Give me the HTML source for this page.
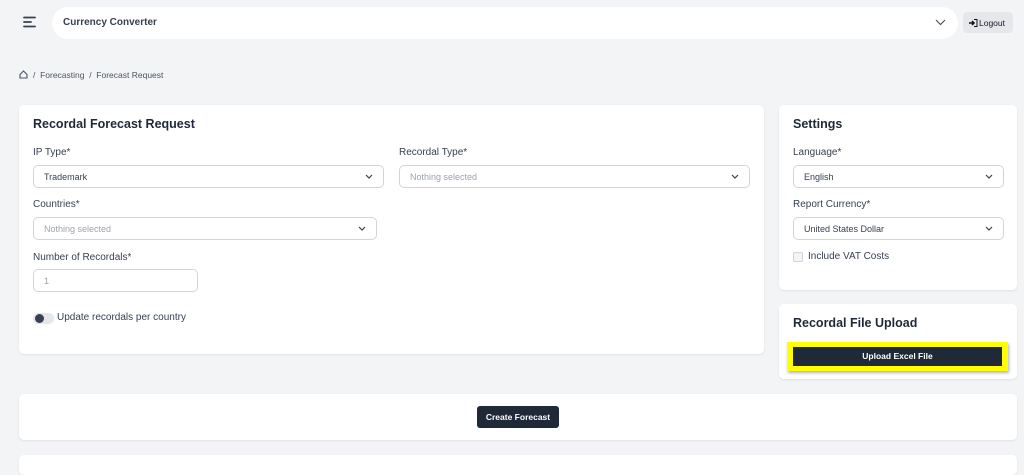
<!DOCTYPE html>
<html><head><style>
*{box-sizing:border-box;margin:0;padding:0}
body{width:1024px;height:458px;overflow:hidden;background:#f3f4f6;font-family:"Liberation Sans",sans-serif;color:#1f2937;position:relative}
.a{position:absolute}
.card{position:absolute;background:#fff;border-radius:5px;box-shadow:0 1px 2px rgba(0,0,0,.08)}
.lbl{position:absolute;font-size:10px;color:#374151}
.sel{position:absolute;height:23px;border:1px solid #d1d5db;border-radius:5px;font-size:9px;color:#374151;padding:6px 10px;background:#fff}
.sel.ph{color:#9ca3af}
.sel svg{position:absolute;right:10px;top:8px}
h3{position:absolute;font-size:12.5px;font-weight:bold;color:#1f2937}
</style></head><body>
<svg class="a" style="left:23px;top:16px" width="14" height="12" viewBox="0 0 14 12"><path d="M1 1.5h11M1 6h7M1 10.5h11" stroke="#374151" stroke-width="1.8" stroke-linecap="round"/></svg>
<div class="a" style="left:52px;top:7px;width:906px;height:32px;background:#fff;border-radius:16px"></div>
<div class="a" style="left:63px;top:17px;font-size:10px;font-weight:bold;color:#374151">Currency Converter</div>
<svg class="a" style="left:935px;top:19px" width="11" height="7" viewBox="0 0 11 7"><path d="M1 1l4.5 4.5L10 1" stroke="#4b5563" fill="none" stroke-width="1.2"/></svg>
<div class="a" style="left:963px;top:12px;width:50px;height:21px;background:#e5e7eb;border-radius:4px;font-size:8.5px;color:#111827;padding:6px 0 0 6px">
<svg style="vertical-align:-1px;margin-right:1px" width="9" height="8" viewBox="0 0 9 8"><path d="M5 .5h3v7H5" stroke="#111" fill="none" stroke-width="1"/><path d="M0 4h5M3 2l2 2-2 2" stroke="#111" fill="none" stroke-width="1.5"/></svg>Logout</div>
<svg class="a" style="left:19px;top:70px" width="9" height="9" viewBox="0 0 9 9"><path d="M1 4.5L4.5 1 8 4.5V8H1z" stroke="#4b5563" fill="none" stroke-width="1.1"/></svg>
<div class="a" style="left:33px;top:70px;font-size:8.5px;color:#4b5563">/ &nbsp;Forecasting &nbsp;/ &nbsp;Forecast Request</div>

<div class="card" style="left:19px;top:105px;width:745px;height:249px"></div>
<h3 style="left:33px;top:117px">Recordal Forecast Request</h3>
<div class="lbl" style="left:33px;top:147px">IP Type*</div>
<div class="sel" style="left:33px;top:165px;width:351px">Trademark<svg width="8" height="5" viewBox="0 0 8 5"><path d="M1 1l3 3 3-3" stroke="#374151" fill="none" stroke-width="1.2"/></svg></div>
<div class="lbl" style="left:399px;top:147px">Recordal Type*</div>
<div class="sel ph" style="left:399px;top:165px;width:351px">Nothing selected<svg width="8" height="5" viewBox="0 0 8 5"><path d="M1 1l3 3 3-3" stroke="#374151" fill="none" stroke-width="1.2"/></svg></div>
<div class="lbl" style="left:33px;top:199px">Countries*</div>
<div class="sel ph" style="left:33px;top:217px;width:344px">Nothing selected<svg width="8" height="5" viewBox="0 0 8 5"><path d="M1 1l3 3 3-3" stroke="#374151" fill="none" stroke-width="1.2"/></svg></div>
<div class="lbl" style="left:33px;top:252px">Number of Recordals*</div>
<div class="sel ph" style="left:33px;top:269px;width:165px">1</div>
<div class="a" style="left:33px;top:313px;width:21px;height:11px;border-radius:6px;background:#e5e7eb"></div>
<div class="a" style="left:35px;top:314px;width:9px;height:9px;border-radius:50%;background:#374151"></div>
<div class="lbl" style="left:57px;top:312px">Update recordals per country</div>

<div class="card" style="left:779px;top:105px;width:238px;height:185px"></div>
<h3 style="left:793px;top:117px">Settings</h3>
<div class="lbl" style="left:793px;top:147px">Language*</div>
<div class="sel" style="left:793px;top:165px;width:211px">English<svg width="8" height="5" viewBox="0 0 8 5"><path d="M1 1l3 3 3-3" stroke="#374151" fill="none" stroke-width="1.2"/></svg></div>
<div class="lbl" style="left:793px;top:199px">Report Currency*</div>
<div class="sel" style="left:793px;top:217px;width:211px">United States Dollar<svg width="8" height="5" viewBox="0 0 8 5"><path d="M1 1l3 3 3-3" stroke="#374151" fill="none" stroke-width="1.2"/></svg></div>
<div class="a" style="left:793px;top:252px;width:10px;height:10px;border:1px solid #d1d5db;border-radius:2px;background:#f3f4f6"></div>
<div class="lbl" style="left:808px;top:251px">Include VAT Costs</div>

<div class="card" style="left:779px;top:304px;width:238px;height:75px"></div>
<h3 style="left:793px;top:316px">Recordal File Upload</h3>
<div class="a" style="left:787px;top:342px;width:221px;height:29px;background:#ffff00;box-shadow:1px 2px 3px rgba(0,0,0,.3)"></div>
<div class="a" style="left:793px;top:347px;width:209px;height:19px;background:#1f2937;color:#fff;font-size:8.5px;font-weight:bold;text-align:center;line-height:19px">Upload Excel File</div>

<div class="card" style="left:19px;top:394px;width:998px;height:46px"></div>
<div class="a" style="left:477px;top:406px;width:82px;height:22px;background:#1f2937;border-radius:3px;color:#fff;font-size:8.5px;font-weight:bold;text-align:center;line-height:22px">Create Forecast</div>
<div class="card" style="left:19px;top:455px;width:998px;height:20px"></div>
</body></html>
